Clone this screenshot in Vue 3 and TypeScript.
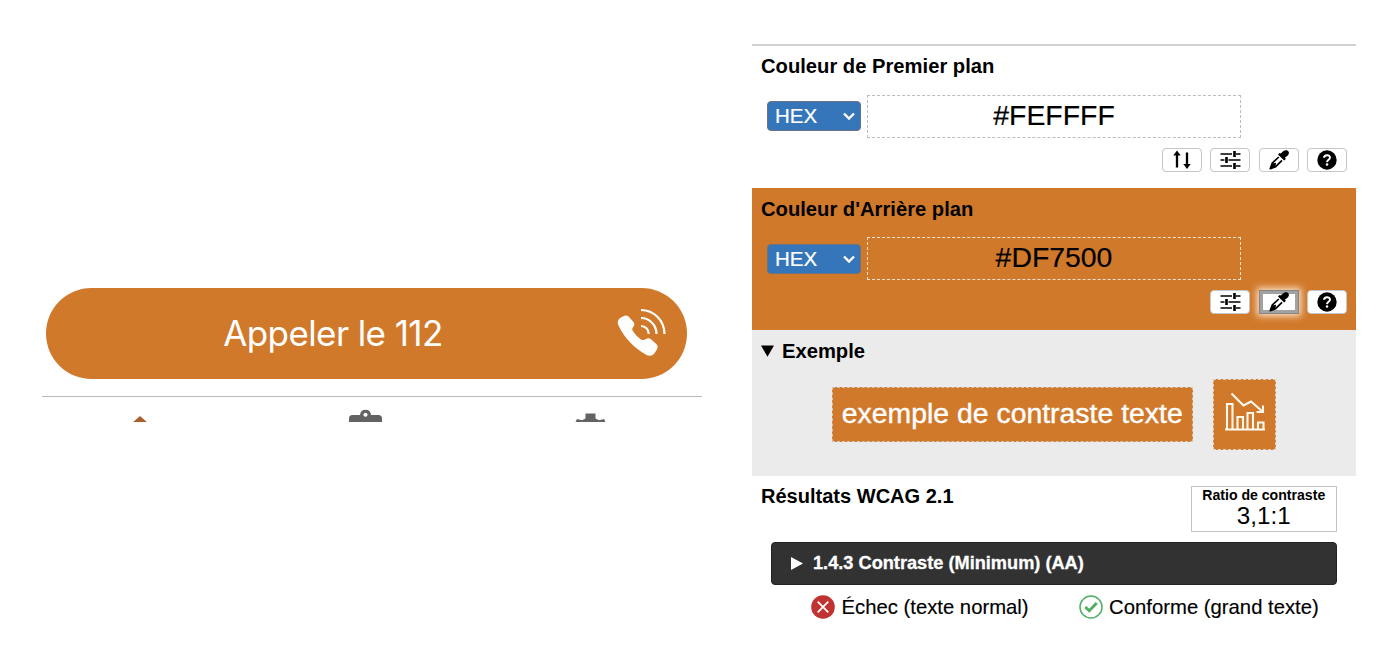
<script setup lang="ts">
interface ColorPanel {
  id: string
  title: string
  value: string
  tools: string[]
  focused?: string
}

const panels: ColorPanel[] = [
  { id: 'fg', title: 'Couleur de Premier plan', value: '#FEFFFF', tools: ['swap', 'sliders', 'picker', 'help'] },
  { id: 'bg', title: "Couleur d'Arrière plan", value: '#DF7500', tools: ['sliders', 'picker', 'help'], focused: 'picker' },
]
</script>

<template>
  <main class="page">
    <section class="phone">
      <button class="call">
        <span class="call-label">Appeler le 112</span>
        <svg class="call-icon" width="50" height="50" viewBox="0 0 50 50">
          <path d="M2.500 17.500C1 14 2 11.500 4.500 9.800L7.500 8.200C9.500 7 11.500 7.300 13 9L17.300 13.800C18.700 15.300 18.600 17 17.500 18.500C15.900 20.300 15.900 21.600 17 23.300C19.500 26.800 22 29.500 25 31.500C27 32.500 28.400 32 30 31C31.500 30 33.500 30.200 35 31.300L40 35.800C41.800 37.500 42.200 39.300 41 41.200L39.500 43.800C37.500 47.200 34.500 48.800 30.500 47C18.500 40.500 8 29.500 2.500 17.500Z" fill="#fff" />
          <g fill="none" stroke="#fff" stroke-width="2.200">
            <path d="M25 2A23.500 24 0 0 1 48.500 26" />
            <path d="M25 10A15.500 16 0 0 1 40.500 26" />
            <path d="M25 18A7.800 8 0 0 1 32.800 26" />
          </g>
        </svg>
      </button>
      <nav class="tabs">
        <svg width="24" height="9" viewBox="0 0 24 9"><path d="M4 9L12 2L20 9Z" fill="#a9602a" /></svg>
        <svg class="tab-mid" width="36" height="14" viewBox="0 0 36 14"><path fill-rule="evenodd" d="M1 14V9.500Q1 6 4.500 6H12Q12.500 .8 17.500 .8T23 6H30.500Q34 6 34 9.500V14ZM17.500 3.800a2 2 0 1 0 .01 0Z" fill="#636363" /></svg>
        <svg width="34" height="10" viewBox="0 0 34 10"><path d="M1 10L3 6L8 7.200L11.500 5.500V.5H21.500V5.500L25 7.200L30 6L32 10Z" fill="#636363" /></svg>
      </nav>
    </section>

    <section class="analyser">
      <section v-for="p in panels" :key="p.id" class="color-panel" :class="p.id">
        <h2>{{ p.title }}</h2>
        <div class="entry">
          <div class="format">
            <span>HEX</span>
            <svg width="14" height="10" viewBox="0 0 14 10"><path d="M2 2.500L7 7.500L12 2.500" fill="none" stroke="#fff" stroke-width="2.400" /></svg>
          </div>
          <div class="value">{{ p.value }}</div>
        </div>
        <div class="tools">
          <button v-for="t in p.tools" :key="t" class="tool" :class="[t, { focused: p.focused === t }]">
            <svg v-if="t === 'swap'" width="22" height="22" viewBox="0 0 22 22">
              <path d="M6 18.500V5M16 3.500V17" stroke="#000" stroke-width="2.300" />
              <path d="M2.300 6.500L6 1.500L9.700 6.500ZM12.300 15L16 20L19.700 15Z" />
            </svg>
            <svg v-else-if="t === 'sliders'" width="22" height="22" viewBox="0 0 22 22">
              <path d="M1.500 5H13M17 5H21.500M1.500 11H5.500M9.500 11H21.500M1.500 17H13M17 17H21.500" stroke="#000" stroke-width="1.500" />
              <path d="M15.500 2V8M7.500 8V14M15.500 14V20" stroke="#000" stroke-width="2.600" />
            </svg>
            <svg v-else-if="t === 'picker'" width="22" height="22" viewBox="0 0 22 22">
              <path d="M12.500 4.500L14.500 3C15.500 1.600 17 .8 18.800 1.300C21 2 21.600 4.300 20.200 6C19.200 7.200 17.800 7.700 17 8.600L17.800 10L16.200 11.500L10 5.500L11.500 4Z" />
              <path d="M10.800 8L4.200 14.200L2.300 19.600L7.700 17.700L14 11.300" fill="none" stroke="#000" stroke-width="1.700" stroke-linejoin="round" />
              <path d="M4 14.500L8 13.800L7.500 17.700L2.300 19.500Z" />
            </svg>
            <svg v-else width="22" height="22" viewBox="0 0 22 22">
              <circle cx="11" cy="11" r="9.700" />
              <path d="M8 8.800C8.200 5.300 14 5.400 14 8.600C14 10.800 11.200 10.700 11 13.100" fill="none" stroke="#fff" stroke-width="2" />
              <circle cx="11" cy="15.600" r="1.250" fill="#fff" />
            </svg>
          </button>
        </div>
      </section>

      <section class="sample">
        <h2><svg width="14" height="12" viewBox="0 0 14 12"><path d="M0 .5H13L6.500 11.800Z" /></svg>Exemple</h2>
        <div class="sample-row">
          <div class="sample-text">exemple de contraste texte</div>
          <div class="sample-icon">
            <svg width="42" height="42" viewBox="0 0 42 42" fill="none" stroke="#fff8ec" stroke-width="2.100">
              <path d="M1 38.500H41" />
              <path d="M3 38V13H8.500V38M13.500 38V26H19V38M23.500 38V22H29V38M34 38V31.500H39.500V38" />
              <path d="M7.500 2.500L19.500 14.500L27 10.500L38.500 20.500" />
              <path d="M39 14.500V21H32.500" />
            </svg>
          </div>
        </div>
      </section>

      <section class="results">
        <header>
          <h2>Résultats WCAG 2.1</h2>
          <div class="ratio"><strong>Ratio de contraste</strong><span>3,1:1</span></div>
        </header>
        <div class="criterion">
          <svg width="13" height="14" viewBox="0 0 13 14"><path d="M0 0L12 6.500L0 13Z" fill="#fff" /></svg>
          <span>1.4.3 Contraste (Minimum) (AA)</span>
        </div>
        <div class="verdicts">
          <span class="verdict">
            <svg width="24" height="24" viewBox="0 0 24 24"><circle cx="12" cy="12" r="11.800" fill="#c13333" /><path d="M6.700 6.700L17.300 17.300M17.300 6.700L6.700 17.300" stroke="#fff" stroke-width="1.700" /></svg>
            Échec (texte normal)
          </span>
          <span class="verdict">
            <svg width="24" height="24" viewBox="0 0 24 24"><circle cx="12" cy="12" r="11" fill="#fff" stroke="#4fae62" stroke-width="1.500" /><path d="M6.300 12L10.300 15.800L17.700 8" fill="none" stroke="#4fae62" stroke-width="2.900" /></svg>
            Conforme (grand texte)
          </span>
        </div>
      </section>
    </section>
  </main>
</template>

<style>
body { background: #fff; }
</style>

<style scoped>
* { box-sizing: border-box; }
.page { display: flex; width: 1396px; height: 658px; padding-left: 42px; overflow: hidden; font-family: "Liberation Sans", Arial, sans-serif; color: #000; }
svg { display: block; flex: none; }
button { font: inherit; margin: 0; padding: 0; }
h2 { margin: 0; font-size: 20.2px; line-height: 24px; font-weight: 700; white-space: nowrap; }

.phone { width: 660px; height: 422px; padding-top: 288px; overflow: hidden; }
.call { display: flex; align-items: center; width: 641px; height: 90.500px; margin-left: 3.700px; padding: 0 21px 0 177.500px; border: 0; border-radius: 46px; background: #d1792b; color: #fff; justify-content: space-between; }
.call-label { font-family: Inter, sans-serif; font-size: 35px; line-height: 44px; letter-spacing: -.6px; white-space: nowrap; }
.tabs { display: flex; align-items: flex-end; height: 27px; margin-top: 17.500px; padding-left: 86px; border-top: 1px solid #b9b9b9; }
.tab-mid { margin: 0 190px 0 196px; }

.analyser { width: 604px; margin: 44px 0 0 50px; border-top: 2px solid #d3d0d3; }
.color-panel { height: 142px; padding-top: 8px; }
.color-panel.bg { padding-top: 9px; background: #d1792b; }
.color-panel h2 { padding-left: 9px; }
.entry { display: flex; align-items: center; height: 43px; margin: 17px 0 0 15px; gap: 6px; }
.bg .entry { margin-top: 16px; }
.bg .format { margin-bottom: 0; }
.format { display: flex; align-items: center; justify-content: space-between; width: 94px; height: 30px; margin-bottom: 1px; padding: 0 4px 0 7px; border: 1px solid #6b7480; border-radius: 4px; background: #3575b9; color: #fff; font-size: 20.500px; -webkit-text-stroke: .2px #fff; }
.value { width: 374px; height: 43px; border: 1px dashed #bdbdbd; font-size: 28.400px; line-height: 39px; text-align: center; -webkit-text-stroke: .2px #000; }
.bg .value { border-color: #f6e3d2; }
.tools { display: flex; justify-content: flex-end; gap: 8.500px; margin: 10px 9px 0 0; }
.tool { display: grid; place-items: center; width: 40px; height: 24px; border: 1px solid #c6c6c6; border-radius: 4px; background: #fff; }
.tool.focused { border: 4px solid #a2a2a2; outline: 1px solid #858585; outline-offset: -1px; border-radius: 0; box-shadow: 0 0 7px 2px #ffe7ce; }
.tool.focused svg { margin: -3px 0; }

.sample { height: 146px; padding-top: 9px; background: #ebebeb; }
.sample h2 { display: flex; align-items: center; gap: 7px; padding-left: 9px; }
.sample-row { display: flex; align-items: center; gap: 20px; margin: 16px 0 0 79.500px; }
.sample-text { width: 361.500px; height: 55px; border: 1px dashed #d5c2b3; background: #d1792b; color: #fff; font-size: 28.400px; line-height: 51px; text-align: center; white-space: nowrap; -webkit-text-stroke: .4px #fff; }
.sample-icon { display: grid; place-items: center; width: 63px; height: 71px; padding-bottom: 6px; border: 1px dashed #e0d0c2; background: #d1792b; }

.results header { display: flex; justify-content: space-between; height: 66px; padding: 8px 19px 0 9px; }
.results h2 { font-size: 20.050px; }
.ratio { display: flex; flex-direction: column; align-items: center; width: 146.500px; height: 46px; margin-top: 2px; border: 1px solid #c3c3c3; }
.ratio strong { font-size: 14.100px; line-height: 16px; }
.ratio span { font-size: 24.200px; line-height: 26px; }
.criterion { display: flex; align-items: center; gap: 9.500px; width: 566px; height: 43px; margin-left: 19px; padding-left: 18.500px; border: 1px solid #222; border-radius: 4px; background: #323232; color: #fff; font-size: 18.200px; font-weight: 700; -webkit-text-stroke: .3px #fff; }
.verdicts { display: flex; gap: 50px; margin: 9px 0 0 59px; font-size: 20.300px; line-height: 26px; -webkit-text-stroke: .15px #000; }
.verdict { display: flex; align-items: center; gap: 6.500px; white-space: nowrap; }
</style>
